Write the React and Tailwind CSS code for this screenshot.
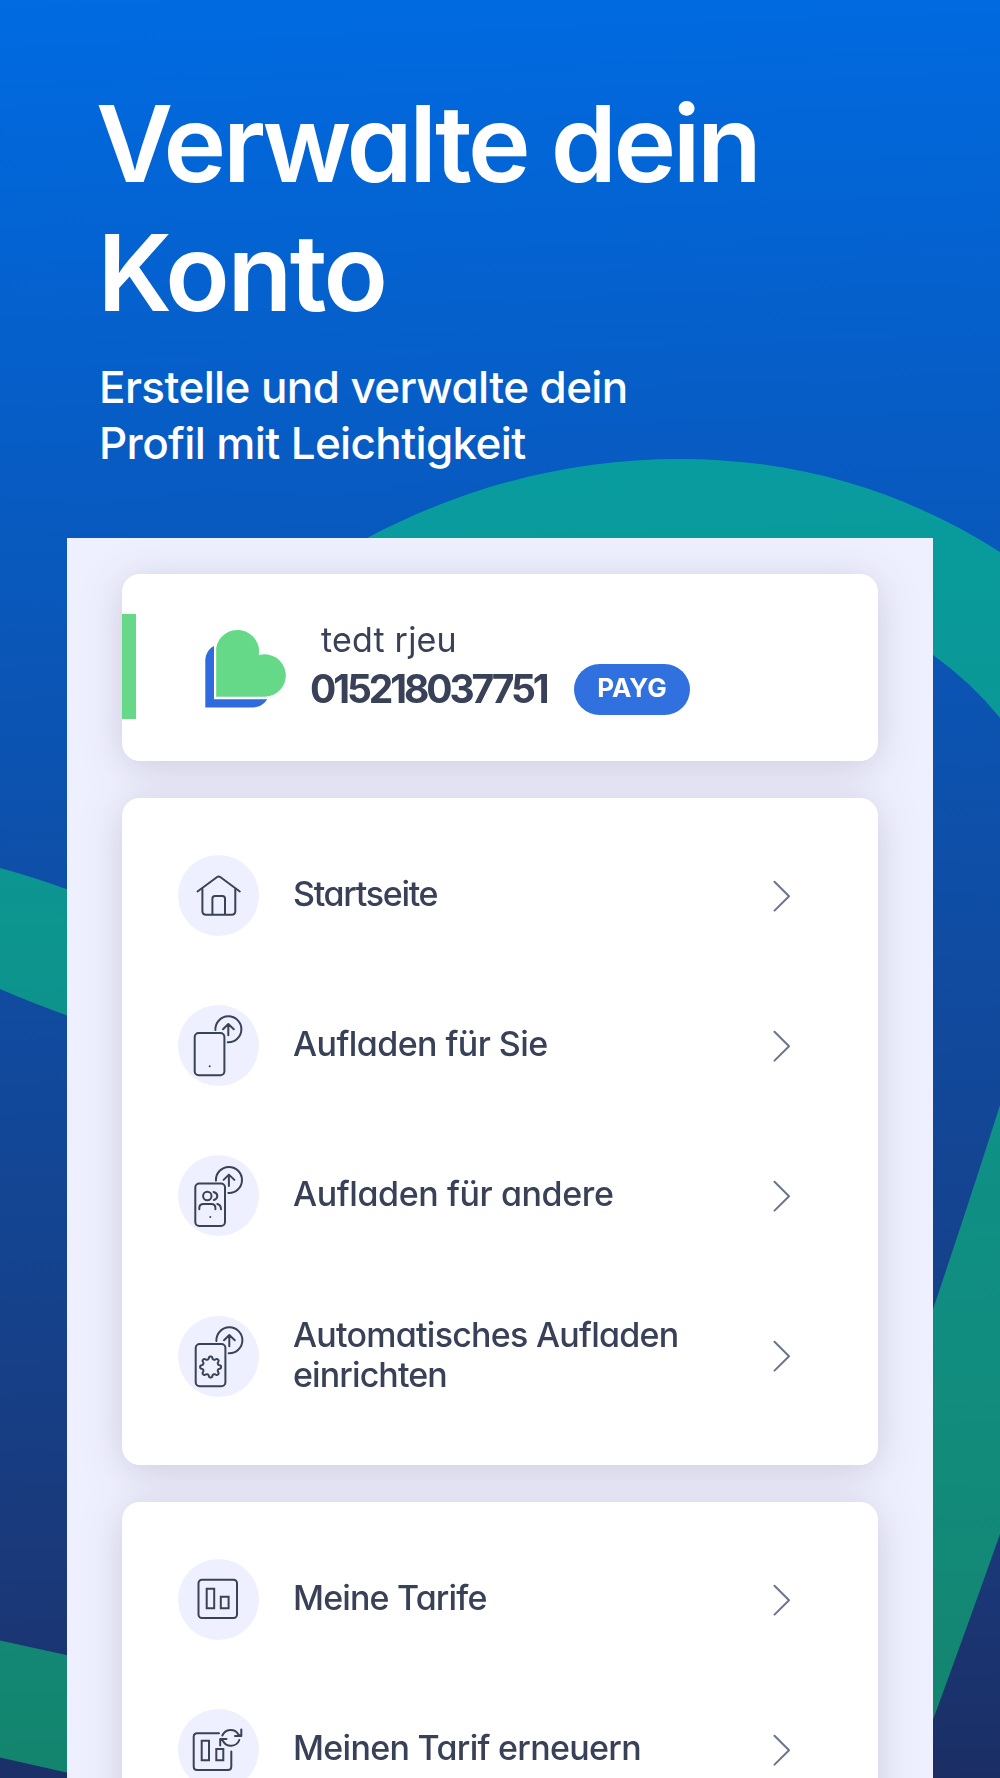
import React from 'react';

const FONT = "font-['Inter','Liberation_Sans',sans-serif] [font-feature-settings:'cv11']";

function Backdrop() {
  return (
    <svg className="absolute inset-0" width="1000" height="1778" viewBox="0 0 1000 1778" aria-hidden="true">
      <g fill="#0ae976" fillOpacity="0.46">
        <path d="M367 538C465 486 570 459 680 459C800 459 906 492 1000 552V718Q972 683 933 655L800 560H330Z" />
        <path d="M0 868Q34 877 80 894V1020Q34 1004 0 989Z" />
        <path d="M1000 1105Q968 1206 920 1348V1755Q964 1636 1000 1534Z" />
        <path d="M0 1640.5L80 1658V1775.5L0 1757.5Z" />
      </g>
    </svg>
  );
}

function Logo() {
  return (
    <svg width="84" height="84" viewBox="204 625 84 84" aria-hidden="true">
      <path d="M214 646C208 649 205.300 655 205.300 661V707.400H253C259 707.400 264 704.500 267.300 699.300H214Z" fill="#2f6bdc" />
      <path d="M216.200 696.800V648A21.400 21.400 0 1 1 258.800 655A21.300 21.300 0 1 1 265.300 696.800Z" fill="#65d987" />
    </svg>
  );
}

function IconDisc({ children }) {
  return (
    <svg className="shrink-0" width="81" height="81" viewBox="0 0 81 81" fill="none" stroke="#3a4257" strokeWidth="2" strokeLinecap="round" strokeLinejoin="round" aria-hidden="true">
      <circle cx="40.500" cy="40.500" r="40.500" fill="#eff0ff" stroke="none" />
      {children}
    </svg>
  );
}

function TopUp({ dx = 0, dy = 0, dot = true, children }) {
  return (
    <IconDisc>
      <g transform={`translate(${dx} ${dy})`}>
        <rect x="16.700" y="28" width="29.700" height="42.300" rx="4" />
        <path d="M37.400 25A13 13 0 1 1 49.700 37.300M50.300 30.300V19.200M45 24.300L50.300 19L55.800 24.300" />
        {dot && <circle cx="31.700" cy="61.300" r="1" fill="#3a4257" stroke="none" />}
      </g>
      {children}
    </IconDisc>
  );
}

function HomeIcon() {
  return (
    <IconDisc>
      <path d="M19.500 36.500L39.500 21.800Q40.700 21 41.900 21.800L61.800 36.500" />
      <path d="M24.400 34V56Q24.400 59.700 28 59.700H53.600Q57.300 59.700 57.300 56V34M34.400 59.500V43.500Q34.400 41 37 41H44.400Q47 41 47 43.500V59.500" />
    </IconDisc>
  );
}

function TopUpOthersIcon() {
  return (
    <TopUp dx={0.6} dy={0.6}>
      <circle cx="29.300" cy="41" r="4.200" />
      <path d="M21.300 54.300V53Q21.300 49 25.500 49H33.300Q37.400 49 37.400 53V54.300M35.600 37Q39.300 38 39.300 41T35.800 45M39.300 49Q43 49.800 43 54.300" />
    </TopUp>
  );
}

const GEAR = Array.from({ length: 97 }, (_, i) => {
  const a = (i / 96) * Math.PI * 2;
  const r = 9.2 + 1.35 * Math.tanh(1.8 * Math.cos(8 * a));
  return `${(32.6 + r * Math.sin(a)).toFixed(2)},${(51 - r * Math.cos(a)).toFixed(2)}`;
}).join(' ');

function AutoTopUpIcon() {
  return (
    <TopUp dx={1} dy={0} dot={false}>
      <polygon points={GEAR} />
    </TopUp>
  );
}

function PlansIcon() {
  return (
    <IconDisc>
      <rect x="20.500" y="20.700" width="38.500" height="38.300" rx="3.500" />
      <path d="M28.700 29.700H36.200V49.300H28.700ZM42.800 37.700H50.600V49.300H42.800Z" strokeLinejoin="miter" />
    </IconDisc>
  );
}

function RenewIcon() {
  return (
    <IconDisc>
      <path d="M41 24.300H19.200Q15.700 24.300 15.700 27.800V57.500Q15.700 61 19.200 61H49.800Q53.300 61 53.300 57.500V42.500" />
      <path d="M23.700 31.700H31V51.300H23.700ZM38.300 40H45.300V51.300H38.300Z" strokeLinejoin="miter" />
      <path d="M44.300 26.500A9 9 0 0 1 60.500 25.500L62.500 27M63.300 20.500V27H57M61.300 31A9 9 0 0 1 45 32L42.500 30M42.200 36.500V30H48.500" />
    </IconDisc>
  );
}

function Chevron() {
  return (
    <svg className="ml-auto shrink-0" width="18" height="32" viewBox="0 0 18 32" fill="none" stroke="#6b748e" strokeWidth="2" strokeLinecap="round" strokeLinejoin="round" aria-hidden="true">
      <path d="M1.500 1.800L16 16.200L1.500 30.600" />
    </svg>
  );
}

function Row({ icon, lines, tracking, tall }) {
  return (
    <div className={`flex items-center pr-[87.500px] pl-14 ${tall ? 'h-[171.500px]' : 'h-[150px]'}`}>
      {icon}
      <div className="ml-[34px] pb-[3px] text-[34px] leading-[39.500px] font-medium whitespace-nowrap text-[#384157]">
        {lines.map((line, i) => (
          <div key={line} className={tracking[i]}>{line}</div>
        ))}
      </div>
      <Chevron />
    </div>
  );
}

const CARD = 'rounded-[18px] bg-white';

export default function App() {
  return (
    <div className={`relative h-[1778px] w-[1000px] overflow-hidden bg-[linear-gradient(178deg,#006be2_0%,#075cc4_25%,#0f4da4_52%,#1a3878_88%,#1b2e64_100%)] ${FONT}`}>
      <Backdrop />
      <div className="relative flex h-full flex-col">
        <header className="h-[538px] shrink-0 pt-20 pl-[96px] text-white">
          <h1 className="text-[106px] leading-[128.500px] font-semibold">
            <span className="block tracking-[-3.400px]">Verwalte dein</span>
            <span className="block pl-[1.500px] tracking-[-2.500px]">Konto</span>
          </h1>
          <p className="mt-[22px] pl-[3px] text-[44px] leading-[56px] font-medium">
            <span className="block tracking-[-0.600px]">Erstelle und verwalte dein</span>
            <span className="block tracking-[-0.630px]">Profil mit Leichtigkeit</span>
          </p>
        </header>

        <main className="mx-[67px] flex-1 overflow-hidden bg-[#eff0ff]">
          <div className="mx-[55px] flex flex-col gap-[37px] pt-[35.500px] drop-shadow-[0_6px_20px_rgba(30,20,50,0.170)]">
            <section className={`${CARD} flex h-[187px]`}>
              <div className="mt-[40.500px] h-[105px] w-3.5 bg-[#65d987]" />
              <div className="mt-[51.500px] ml-[68px]">
                <Logo />
              </div>
              <div className="ml-[22px] pt-12 text-[#384157]">
                <div className="pl-[11px] text-[34px] leading-9 tracking-[0.200px]">tedt rjeu</div>
                <div className="mt-[5.500px] flex h-[52px] items-center">
                  <span className="w-[264px] text-[39px] font-bold tracking-[-3.100px]">015218037751</span>
                  <span className="flex h-[51px] w-[116px] items-center justify-center rounded-full bg-[#3170df] pb-[3px] text-[26px] font-bold text-white">PAYG</span>
                </div>
              </div>
            </section>

            <section className={`${CARD} h-[667px] pt-[23px]`}>
              <Row icon={<HomeIcon />} lines={['Startseite']} tracking={['tracking-[-1.300px]']} />
              <Row icon={<TopUp />} lines={['Aufladen für Sie']} tracking={['tracking-[-0.560px]']} />
              <Row icon={<TopUpOthersIcon />} lines={['Aufladen für andere']} tracking={['tracking-[-0.400px]']} />
              <Row icon={<AutoTopUpIcon />} lines={['Automatisches Aufladen', 'einrichten']} tracking={['tracking-[-0.750px]', 'tracking-[-0.900px]']} tall />
            </section>

            <section className={`${CARD} h-[667px] pt-[23px]`}>
              <Row icon={<PlansIcon />} lines={['Meine Tarife']} tracking={['tracking-[-0.850px]']} />
              <Row icon={<RenewIcon />} lines={['Meinen Tarif erneuern']} tracking={['tracking-[-0.700px]']} />
            </section>
          </div>
        </main>
      </div>
    </div>
  );
}
